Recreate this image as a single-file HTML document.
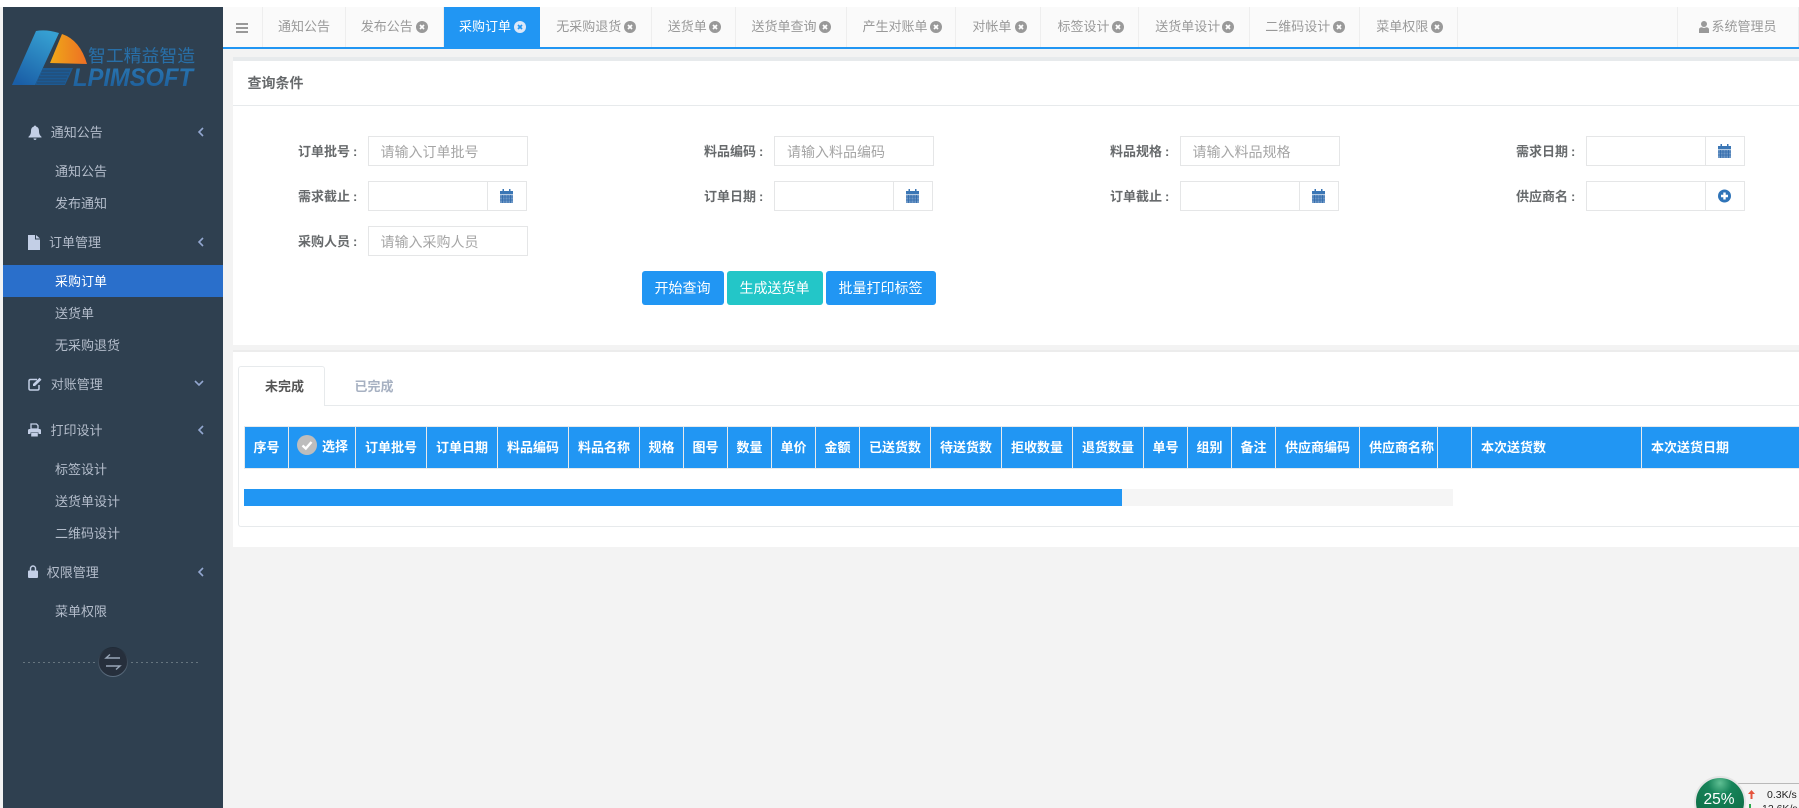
<!DOCTYPE html>
<html lang="zh-CN">
<head>
<meta charset="utf-8">
<title>采购订单</title>
<style>
html,body{margin:0;padding:0;width:1799px;height:808px;overflow:hidden;background:#f3f3f3;}
body{position:relative;font-family:"WenQuanYi Zen Hei","Liberation Sans","Noto Sans CJK SC",sans-serif;font-size:13px;color:#676a6c;}
div,span,svg{position:absolute;display:block;box-sizing:border-box;}
.t{white-space:nowrap;line-height:20px;height:20px;}
.m{color:#b4bdcb;}
.tab{top:7px;height:40px;background:#fafafa;border-right:1px solid #eee;}
.tt{top:17px;color:#999;}
.x{top:21px;width:12px;height:12px;}
.lb{font-weight:bold;color:#676a6c;}
.lb b{margin-left:3px;}
.in{height:30px;border:1px solid #e5e6e7;background:#fff;}
.ph{font-size:14px;color:#a5a5a5;}
.ad{top:-1px;height:30px;border:1px solid #e5e6e7;border-right:0;}
.btn{top:271px;height:34px;border-radius:3px;color:#fff;font-size:14px;line-height:34px;text-align:center;background:#2196f3;white-space:nowrap;padding-right:1px;}
.th{top:0;height:43px;line-height:43px;text-align:center;color:#fff;font-weight:bold;white-space:nowrap;border-left:1px solid #e7eaec;}
</style>
</head>
<body>
<div style="left:0;top:0;width:1799px;height:7px;background:#fff"></div>

<!-- sidebar -->
<div style="left:3px;top:7px;width:220px;height:801px;background:#2f4050"></div>

<!-- logo -->
<svg style="left:0;top:0" width="223" height="100" viewBox="0 0 223 100">
<defs>
<linearGradient id="lb" x1="0.7" y1="0" x2="0.2" y2="1"><stop offset="0" stop-color="#36a0d2"/><stop offset="1" stop-color="#1a5ea6"/></linearGradient>
<linearGradient id="lo" x1="0" y1="0" x2="1" y2="0"><stop offset="0" stop-color="#efa818"/><stop offset="1" stop-color="#ee6f24"/></linearGradient>
<linearGradient id="lt" x1="0" y1="0" x2="0" y2="1"><stop offset="0" stop-color="#2a78b4"/><stop offset="1" stop-color="#1c5b98"/></linearGradient>
</defs>
<path d="M36 31 Q46 29 59 33 L35 85 L12 85 Z" fill="url(#lb)"/>
<path d="M62 34 Q80 40 87 64 L50 63 Z" fill="url(#lo)"/>
<path d="M50 68 H73 L65 85 H35 L43 68 Z" fill="#1c5a94"/>
<path d="M42 71 H70 M41 74 H69 M39 77 H67 M38 80 H66 M37 83 H65" stroke="#2f4050" stroke-width="1" opacity=".55"/>
<text x="88" y="62" font-family="'WenQuanYi Zen Hei','Noto Sans CJK SC',sans-serif" font-size="17.8" fill="#286fa8" textLength="107">智工精益智造</text>
<text x="73" y="86" font-family="'Liberation Sans',sans-serif" font-size="25" font-weight="bold" font-style="italic" fill="url(#lt)" textLength="120" lengthAdjust="spacingAndGlyphs">LPIMSOFT</text>
</svg>

<!-- sidebar icons -->
<svg style="left:28px;top:125px" width="14" height="15" viewBox="0 0 14 15"><path d="M7 0.5c.7 0 1 .5 1 1 2.2.5 3 2.3 3 4.5 0 3 1 4.500 2.500 5.700v.8H.5v-.8C2 10.500 3 9 3 6c0-2.200.8-4 3-4.500 0-.5.3-1 1-1zM5.500 13.500h3c0 .9-.7 1.500-1.500 1.500s-1.500-.6-1.500-1.500z" fill="#c3cfe6"/></svg>
<svg style="left:28px;top:235px" width="12" height="15" viewBox="0 0 12 15"><path d="M0 0H7V4.500H12V15H0ZM8 0L12 3.500H8Z" fill="#c3cfe6"/></svg>
<svg style="left:28px;top:377px" width="14" height="14" viewBox="0 0 14 14"><path d="M9 2.500H2.500Q1 2.500 1 4V11.500Q1 13 2.500 13H9.500Q11 13 11 11.500V8" fill="none" stroke="#c3cfe6" stroke-width="1.500"/><path d="M5 7L11.500 .8 13.500 2.800 7 9H5Z" fill="#c3cfe6"/></svg>
<svg style="left:28px;top:423px" width="13" height="14" viewBox="0 0 13 14"><path d="M3 1H8.500L10 2.500V6H3Z" fill="none" stroke="#c3cfe6" stroke-width="1.300"/><path d="M1.500 6H11.500Q13 6 13 7.500V11H10.500V9.500H2.500V11H0V7.500Q0 6 1.500 6ZM3.200 10H9.800V13.500H3.200Z" fill="#c3cfe6"/></svg>
<svg style="left:28px;top:565px" width="10" height="14" viewBox="0 0 10 14"><path d="M2.500 6V3.500a2.500 2.500 0 0 1 5 0V6" fill="none" stroke="#c3cfe6" stroke-width="1.400"/><rect x="0" y="5.500" width="10" height="7.500" rx="1" fill="#c3cfe6"/></svg>
<svg style="left:197px;top:126px" width="8" height="12" viewBox="0 0 8 12"><path d="M6 2L2 6l4 4" fill="none" stroke="#93a7d0" stroke-width="1.600"/></svg>
<svg style="left:197px;top:236px" width="8" height="12" viewBox="0 0 8 12"><path d="M6 2L2 6l4 4" fill="none" stroke="#93a7d0" stroke-width="1.600"/></svg>
<svg style="left:193px;top:379px" width="12" height="8" viewBox="0 0 12 8"><path d="M2 2l4 4 4-4" fill="none" stroke="#93a7d0" stroke-width="1.600"/></svg>
<svg style="left:197px;top:424px" width="8" height="12" viewBox="0 0 8 12"><path d="M6 2L2 6l4 4" fill="none" stroke="#93a7d0" stroke-width="1.600"/></svg>
<svg style="left:197px;top:566px" width="8" height="12" viewBox="0 0 8 12"><path d="M6 2L2 6l4 4" fill="none" stroke="#93a7d0" stroke-width="1.600"/></svg>

<!-- sidebar text -->
<span class="t m" style="left:50.700px;top:123px">通知公告</span>
<span class="t m" style="left:55px;top:162px">通知公告</span>
<span class="t m" style="left:55px;top:194px">发布通知</span>
<span class="t m" style="left:49px;top:233px">订单管理</span>
<div style="left:3px;top:265px;width:220px;height:32px;background:#2a6fcb"></div>
<span class="t" style="left:55px;top:272px;color:#fff">采购订单</span>
<span class="t m" style="left:55px;top:304px">送货单</span>
<span class="t m" style="left:55px;top:336px">无采购退货</span>
<span class="t m" style="left:50.700px;top:375px">对账管理</span>
<span class="t m" style="left:50.500px;top:421px">打印设计</span>
<span class="t m" style="left:55px;top:460px">标签设计</span>
<span class="t m" style="left:55px;top:492px">送货单设计</span>
<span class="t m" style="left:55px;top:524px">二维码设计</span>
<span class="t m" style="left:46.700px;top:563px">权限管理</span>
<span class="t m" style="left:55px;top:602px">菜单权限</span>

<!-- sidebar divider -->
<div style="left:23px;top:662px;width:74px;height:1px;background:repeating-linear-gradient(90deg,#66757f 0 2px,transparent 2px 5px)"></div>
<div style="left:131px;top:662px;width:69px;height:1px;background:repeating-linear-gradient(90deg,#66757f 0 2px,transparent 2px 5px)"></div>
<svg style="left:98px;top:647px" width="30" height="30" viewBox="0 0 30 30"><defs><linearGradient id="cg" x1="0" y1="0" x2="0" y2="1"><stop offset="0" stop-color="#1f2a36"/><stop offset="1" stop-color="#5c6e80"/></linearGradient></defs><circle cx="15" cy="15" r="14.500" fill="#262f3c" stroke="url(#cg)"/><path d="M22 11H8L12 7.500M8 19H22L18 22.500" fill="none" stroke="#98a6b8" stroke-width="1.400"/></svg>

<!-- top tabs -->
<div style="left:223px;top:7px;width:1576px;height:40px;background:#fafafa"></div>
<div style="left:223px;top:47px;width:1576px;height:2px;background:#2196f3"></div>
<svg style="left:236px;top:23px" width="12" height="10" viewBox="0 0 12 10"><path d="M0 1H12M0 5H12M0 9H12" stroke="#999" stroke-width="2"/></svg>
<div class="tab" style="left:223px;width:40px;background:none"></div>
<div class="tab" style="left:263px;width:83px"></div>
<div class="tab" style="left:346px;width:98px"></div>
<div style="left:444px;top:7px;width:96px;height:40px;background:#2196f3"></div>
<div class="tab" style="left:540px;width:112px"></div>
<div class="tab" style="left:652px;width:84px"></div>
<div class="tab" style="left:736px;width:111px"></div>
<div class="tab" style="left:847px;width:109px"></div>
<div class="tab" style="left:956px;width:85px"></div>
<div class="tab" style="left:1041px;width:98px"></div>
<div class="tab" style="left:1139px;width:111px"></div>
<div class="tab" style="left:1250px;width:110px"></div>
<div class="tab" style="left:1360px;width:98px"></div>
<div class="tab" style="left:1458px;width:220px"></div>
<div class="tab" style="left:1678px;width:121px"></div>
<span class="t tt" style="left:278px">通知公告</span>
<span class="t tt" style="left:360.700px">发布公告</span>
<span class="t tt" style="left:459px;color:#fff">采购订单</span>
<span class="t tt" style="left:556.300px">无采购退货</span>
<span class="t tt" style="left:667.700px">送货单</span>
<span class="t tt" style="left:751.500px">送货单查询</span>
<span class="t tt" style="left:862.500px">产生对账单</span>
<span class="t tt" style="left:972.400px">对帐单</span>
<span class="t tt" style="left:1057.500px">标签设计</span>
<span class="t tt" style="left:1155.200px">送货单设计</span>
<span class="t tt" style="left:1265.300px">二维码设计</span>
<span class="t tt" style="left:1376.300px">菜单权限</span>
<svg class="x" style="left:416px" viewBox="0 0 12 12"><circle cx="6" cy="6" r="6" fill="#999"/><path d="M4 4l4 4M8 4l-4 4" stroke="#fff" stroke-width="1.700"/></svg>
<svg class="x" style="left:514px" viewBox="0 0 12 12"><circle cx="6" cy="6" r="6" fill="#dbe7f8"/><path d="M4 4l4 4M8 4l-4 4" stroke="#2196f3" stroke-width="1.700"/></svg>
<svg class="x" style="left:624px" viewBox="0 0 12 12"><circle cx="6" cy="6" r="6" fill="#999"/><path d="M4 4l4 4M8 4l-4 4" stroke="#fff" stroke-width="1.700"/></svg>
<svg class="x" style="left:709px" viewBox="0 0 12 12"><circle cx="6" cy="6" r="6" fill="#999"/><path d="M4 4l4 4M8 4l-4 4" stroke="#fff" stroke-width="1.700"/></svg>
<svg class="x" style="left:819px" viewBox="0 0 12 12"><circle cx="6" cy="6" r="6" fill="#999"/><path d="M4 4l4 4M8 4l-4 4" stroke="#fff" stroke-width="1.700"/></svg>
<svg class="x" style="left:930px" viewBox="0 0 12 12"><circle cx="6" cy="6" r="6" fill="#999"/><path d="M4 4l4 4M8 4l-4 4" stroke="#fff" stroke-width="1.700"/></svg>
<svg class="x" style="left:1015px" viewBox="0 0 12 12"><circle cx="6" cy="6" r="6" fill="#999"/><path d="M4 4l4 4M8 4l-4 4" stroke="#fff" stroke-width="1.700"/></svg>
<svg class="x" style="left:1112px" viewBox="0 0 12 12"><circle cx="6" cy="6" r="6" fill="#999"/><path d="M4 4l4 4M8 4l-4 4" stroke="#fff" stroke-width="1.700"/></svg>
<svg class="x" style="left:1222px" viewBox="0 0 12 12"><circle cx="6" cy="6" r="6" fill="#999"/><path d="M4 4l4 4M8 4l-4 4" stroke="#fff" stroke-width="1.700"/></svg>
<svg class="x" style="left:1333px" viewBox="0 0 12 12"><circle cx="6" cy="6" r="6" fill="#999"/><path d="M4 4l4 4M8 4l-4 4" stroke="#fff" stroke-width="1.700"/></svg>
<svg class="x" style="left:1431px" viewBox="0 0 12 12"><circle cx="6" cy="6" r="6" fill="#999"/><path d="M4 4l4 4M8 4l-4 4" stroke="#fff" stroke-width="1.700"/></svg>
<svg style="left:1699px;top:21px" width="10" height="12" viewBox="0 0 10 12"><circle cx="5" cy="3" r="3" fill="#999"/><path d="M0 12V8.500Q0 6.500 2.500 6.200L5 7 7.500 6.200Q10 6.500 10 8.500V12Z" fill="#999"/></svg>
<span class="t tt" style="left:1711.500px">系统管理员</span>

<!-- query card -->
<div style="left:233px;top:57px;width:1566px;height:4px;background:#e7eaec"></div>
<div style="left:233px;top:61px;width:1566px;height:284px;background:#fff"></div>
<div style="left:233px;top:105px;width:1566px;height:1px;background:#e7eaec"></div>
<span class="t" style="left:247.500px;top:73px;font-size:14px;font-weight:bold;color:#676a6c">查询条件</span>

<span class="t lb" style="left:298px;top:142px">订单批号<b>:</b></span>
<span class="t lb" style="left:704px;top:142px">料品编码<b>:</b></span>
<span class="t lb" style="left:1110px;top:142px">料品规格<b>:</b></span>
<span class="t lb" style="left:1516px;top:142px">需求日期<b>:</b></span>
<span class="t lb" style="left:298px;top:187px">需求截止<b>:</b></span>
<span class="t lb" style="left:704px;top:187px">订单日期<b>:</b></span>
<span class="t lb" style="left:1110px;top:187px">订单截止<b>:</b></span>
<span class="t lb" style="left:1516px;top:187px">供应商名<b>:</b></span>
<span class="t lb" style="left:298px;top:232px">采购人员<b>:</b></span>

<div class="in" style="left:368px;top:136px;width:160px"></div>
<span class="t ph" style="left:380.500px;top:142px">请输入订单批号</span>
<div class="in" style="left:774px;top:136px;width:160px"></div>
<span class="t ph" style="left:787px;top:142px">请输入料品编码</span>
<div class="in" style="left:1180px;top:136px;width:160px"></div>
<span class="t ph" style="left:1192.500px;top:142px">请输入料品规格</span>
<div class="in" style="left:368px;top:226px;width:160px"></div>
<span class="t ph" style="left:380.500px;top:232px">请输入采购人员</span>

<div class="in" style="left:1586px;top:136px;width:159px"><div class="ad" style="left:118px;width:40px"></div></div>
<div class="in" style="left:368px;top:181px;width:159px"><div class="ad" style="left:118px;width:40px"></div></div>
<div class="in" style="left:774px;top:181px;width:159px"><div class="ad" style="left:118px;width:40px"></div></div>
<div class="in" style="left:1180px;top:181px;width:159px"><div class="ad" style="left:118px;width:40px"></div></div>
<div class="in" style="left:1586px;top:181px;width:159px"><div class="ad" style="left:118px;width:40px"></div></div>

<svg style="left:500px;top:189px" width="13" height="14" viewBox="0 0 13 14"><path d="M0 2H2.500V0H4V2H9V0H10.500V2H13V5H0Z" fill="#3a76b5"/><rect y="5.500" width="13" height="8.500" fill="#6d97c6"/><path d="M2.500 6V14M5 6V14M8 6V14M10.500 6V14M0 8H13M0 11H13" stroke="#2f6aab" stroke-width=".8"/></svg>
<svg style="left:906px;top:189px" width="13" height="14" viewBox="0 0 13 14"><path d="M0 2H2.500V0H4V2H9V0H10.500V2H13V5H0Z" fill="#3a76b5"/><rect y="5.500" width="13" height="8.500" fill="#6d97c6"/><path d="M2.500 6V14M5 6V14M8 6V14M10.500 6V14M0 8H13M0 11H13" stroke="#2f6aab" stroke-width=".8"/></svg>
<svg style="left:1312px;top:189px" width="13" height="14" viewBox="0 0 13 14"><path d="M0 2H2.500V0H4V2H9V0H10.500V2H13V5H0Z" fill="#3a76b5"/><rect y="5.500" width="13" height="8.500" fill="#6d97c6"/><path d="M2.500 6V14M5 6V14M8 6V14M10.500 6V14M0 8H13M0 11H13" stroke="#2f6aab" stroke-width=".8"/></svg>
<svg style="left:1718px;top:144px" width="13" height="14" viewBox="0 0 13 14"><path d="M0 2H2.500V0H4V2H9V0H10.500V2H13V5H0Z" fill="#3a76b5"/><rect y="5.500" width="13" height="8.500" fill="#6d97c6"/><path d="M2.500 6V14M5 6V14M8 6V14M10.500 6V14M0 8H13M0 11H13" stroke="#2f6aab" stroke-width=".8"/></svg>
<svg style="left:1718px;top:189px" width="13" height="14" viewBox="0 0 13 14"><circle cx="6.500" cy="7" r="6.500" fill="#2f74b8"/><path d="M6.500 3.500V10.500M3 7H10" stroke="#fff" stroke-width="2.400"/></svg>

<div class="btn" style="left:642px;width:82px">开始查询</div>
<div class="btn" style="left:727px;width:96px;background:#23c6c8">生成送货单</div>
<div class="btn" style="left:826px;width:110px">批量打印标签</div>

<!-- list card -->
<div style="left:233px;top:350px;width:1566px;height:197px;background:#fff;border-top:2px solid #ececec"></div>
<div style="left:238px;top:405px;width:1561px;height:122px;border:1px solid #e7eaec;border-right:0;border-top:0;border-radius:0 0 0 3px"></div>
<div style="left:238px;top:405px;width:1561px;height:1px;background:#e7eaec"></div>
<div style="left:238px;top:366px;width:87px;height:40px;border:1px solid #e7eaec;border-bottom:0;border-radius:3px 3px 0 0;background:#fff"></div>
<span class="t" style="left:265px;top:377px;font-weight:bold;color:#555">未完成</span>
<span class="t" style="left:354.500px;top:377px;font-weight:bold;color:#a7b1c2">已完成</span>

<!-- table header -->
<div style="left:244px;top:426px;width:1555px;height:43px;background:#2196f3;border-top:1px solid #e7eaec;border-bottom:1px solid #e7eaec"></div>
<div style="left:244px;top:427px;width:1555px;height:41px;overflow:hidden">
<div class="th" style="left:0;width:44px;top:-1px">序号</div>
<div class="th" style="left:44px;width:67px;top:-1px"></div>
<div class="th" style="left:111px;width:71px;top:-1px">订单批号</div>
<div class="th" style="left:182px;width:71px;top:-1px">订单日期</div>
<div class="th" style="left:253px;width:71px;top:-1px">料品编码</div>
<div class="th" style="left:324px;width:71px;top:-1px">料品名称</div>
<div class="th" style="left:395px;width:44px;top:-1px">规格</div>
<div class="th" style="left:439px;width:44px;top:-1px">图号</div>
<div class="th" style="left:483px;width:44px;top:-1px">数量</div>
<div class="th" style="left:527px;width:44px;top:-1px">单价</div>
<div class="th" style="left:571px;width:44px;top:-1px">金额</div>
<div class="th" style="left:615px;width:71px;top:-1px">已送货数</div>
<div class="th" style="left:686px;width:71px;top:-1px">待送货数</div>
<div class="th" style="left:757px;width:71px;top:-1px">拒收数量</div>
<div class="th" style="left:828px;width:71px;top:-1px">退货数量</div>
<div class="th" style="left:899px;width:44px;top:-1px">单号</div>
<div class="th" style="left:943px;width:44px;top:-1px">组别</div>
<div class="th" style="left:987px;width:44px;top:-1px">备注</div>
<div class="th" style="left:1031px;width:84px;top:-1px">供应商编码</div>
<div class="th" style="left:1115px;width:78px;top:-1px;text-align:left;padding-left:9px">供应商名称</div>
<div class="th" style="left:1193px;width:34px;top:-1px"></div>
<div class="th" style="left:1227px;width:170px;top:-1px;text-align:left;padding-left:9px">本次送货数</div>
<div class="th" style="left:1397px;width:158px;top:-1px;text-align:left;padding-left:9px">本次送货日期</div>
</div>
<svg style="left:297px;top:435px" width="20" height="20" viewBox="0 0 20 20"><circle cx="10" cy="10" r="10" fill="#bdbdbd"/><path d="M5.500 10.500L8.800 13.500 14.500 7" fill="none" stroke="#fff" stroke-width="2.400"/></svg>
<span class="t" style="left:322px;top:437px;color:#fff;font-weight:bold">选择</span>

<!-- progress -->
<div style="left:244px;top:489px;width:1209px;height:17px;background:#f5f5f5"></div>
<div style="left:244px;top:489px;width:878px;height:17px;background:#2196f3"></div>

<!-- tray widget -->
<div style="left:1730px;top:783px;width:69px;height:25px;background:#f4f4f4;border-top:1px solid #b9b9b9;border-left:1px solid #ccc"></div>
<svg style="left:1748px;top:790px" width="7" height="9" viewBox="0 0 7 9"><path d="M3.500 0L7 4H4.500V9H2.500V4H0Z" fill="#e5533c"/></svg>
<div style="left:1749px;top:804px;width:2px;height:4px;background:#2ba84a"></div>
<span class="t" style="left:1767px;top:785px;font-family:'Liberation Sans',sans-serif;font-size:10.500px;color:#222">0.3K/s</span>
<span class="t" style="left:1762px;top:799px;font-family:'Liberation Sans',sans-serif;font-size:10.500px;color:#222">12.6K/s</span>
<svg style="left:1694px;top:776px" width="52" height="32" viewBox="0 0 52 32"><defs><radialGradient id="gr" cx=".5" cy=".12" r=".8"><stop offset="0" stop-color="#5fbf93"/><stop offset=".3" stop-color="#17845a"/><stop offset="1" stop-color="#0c6b43"/></radialGradient></defs><circle cx="26" cy="26" r="25" fill="url(#gr)" stroke="#e4e4e4" stroke-width="2"/></svg>
<span class="t" style="left:1703px;top:790px;width:32px;text-align:center;font-family:'Liberation Sans',sans-serif;font-size:15.500px;line-height:20px;color:#fff">25%</span>
</body>
</html>
